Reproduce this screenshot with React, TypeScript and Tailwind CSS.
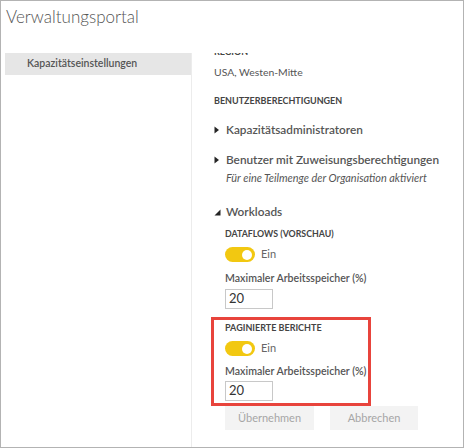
import React from "react";

const font = { fontFamily: 'Lato, "Open Sans", Arial, sans-serif' };

function TriRight() {
  return (
    <svg width="6" height="8" viewBox="0 0 6 8" className="shrink-0">
      <path d="M0.5 0.5 L5 4 L0.5 7.5 Z" fill="#252525" />
    </svg>
  );
}

function TriDown() {
  return (
    <svg width="7" height="7" viewBox="0 0 7 7" className="shrink-0">
      <path d="M6.5 0.5 L6.5 6.5 L0.5 6.5 Z" fill="#252525" />
    </svg>
  );
}

function Toggle() {
  return (
    <div className="flex items-center h-[15px]">
      <div className="w-[30px] h-[15px] rounded-full bg-[#f2c811] flex items-center justify-end pr-[3px]">
        <div className="w-[10px] h-[10px] rounded-full bg-white" />
      </div>
      <span className="ml-[6px] text-[11px] text-[#666]">Ein</span>
    </div>
  );
}

function Input() {
  return (
    <div className="w-[48px] h-[20px] border border-[#c8c8c8] flex items-center pl-[3px] text-[13px] text-[#333]">
      20
    </div>
  );
}

export default function App() {
  return (
    <div style={font} className="w-[464px] h-[448px] border border-[#b3b3b3] bg-white flex flex-col overflow-hidden">
      <div className="h-[52px] shrink-0 pl-[5px] pt-[4px]">
        <div className="text-[17px] font-light text-[#555] leading-[24px]">Verwaltungsportal</div>
      </div>
      <div className="flex flex-1 min-h-0">
        <div className="w-[187px] ml-[4px] border-r border-[#ececec] shrink-0">
          <div className="h-[22px] bg-[#e6e6e6] flex items-center pl-[22px] text-[10.5px] font-semibold text-[#555]">
            Kapazitätseinstellungen
          </div>
        </div>
        <div className="flex-1 overflow-hidden pl-[22px]">
          <div className="flex flex-col text-[#555]">
            <div className="h-[14px] mt-[-8px] flex items-center text-[9px] font-bold text-[#444]">REGION</div>
            <div className="h-[14px] mt-[7px] flex items-center text-[10.4px] text-[#555]">USA, Westen-Mitte</div>
            <div className="h-[14px] mt-[14px] flex items-center text-[9px] font-bold text-[#444]">BENUTZERBERECHTIGUNGEN</div>
            <div className="h-[18px] mt-[13px] flex items-center">
              <TriRight />
              <span className="ml-[6px] text-[11.8px] font-semibold text-[#555]">Kapazitätsadministratoren</span>
            </div>
            <div className="h-[18px] mt-[12px] flex items-center">
              <TriRight />
              <span className="ml-[6px] text-[11.8px] font-semibold text-[#555] whitespace-nowrap">Benutzer mit Zuweisungsberechtigungen</span>
            </div>
            <div className="h-[14px] mt-[2px] flex items-center pl-[12px] text-[10.9px] italic text-[#555] whitespace-nowrap">
              Für eine Teilmenge der Organisation aktiviert
            </div>
            <div className="h-[18px] mt-[18px] flex items-center">
              <TriDown />
              <span className="ml-[5px] text-[11.8px] font-semibold text-[#555]">Workloads</span>
            </div>
            <div className="pl-[11px] flex flex-col">
              <div className="h-[14px] mt-[6px] flex items-center text-[8.8px] font-bold text-[#444]">DATAFLOWS (VORSCHAU)</div>
              <div className="mt-[6px]"><Toggle /></div>
              <div className="h-[14px] mt-[10px] flex items-center text-[10.6px] font-semibold text-[#555] whitespace-nowrap">Maximaler Arbeitsspeicher (%)</div>
              <div className="mt-[3px]"><Input /></div>
              <div className="mt-[8px] ml-[-14px] w-[160px] border-[3px] border-[#e8443c] pl-[11px] pt-[1px] pb-[2px] flex flex-col">
                <div className="h-[14px] flex items-center text-[9px] font-bold text-[#444]">PAGINIERTE BERICHTE</div>
                <div className="mt-[6px]"><Toggle /></div>
                <div className="h-[14px] mt-[9px] flex items-center text-[10.6px] font-semibold text-[#555] whitespace-nowrap">Maximaler Arbeitsspeicher (%)</div>
                <div className="mt-[2px]"><Input /></div>
              </div>
              <div className="flex gap-[16px]">
                <div className="w-[89px] h-[24px] bg-[#f3f3f3] flex items-center justify-center text-[11px] text-[#a6a6a6]">Übernehmen</div>
                <div className="w-[88px] h-[24px] bg-[#f3f3f3] flex items-center justify-center text-[11px] text-[#a6a6a6]">Abbrechen</div>
              </div>
            </div>
          </div>
        </div>
      </div>
    </div>
  );
}
